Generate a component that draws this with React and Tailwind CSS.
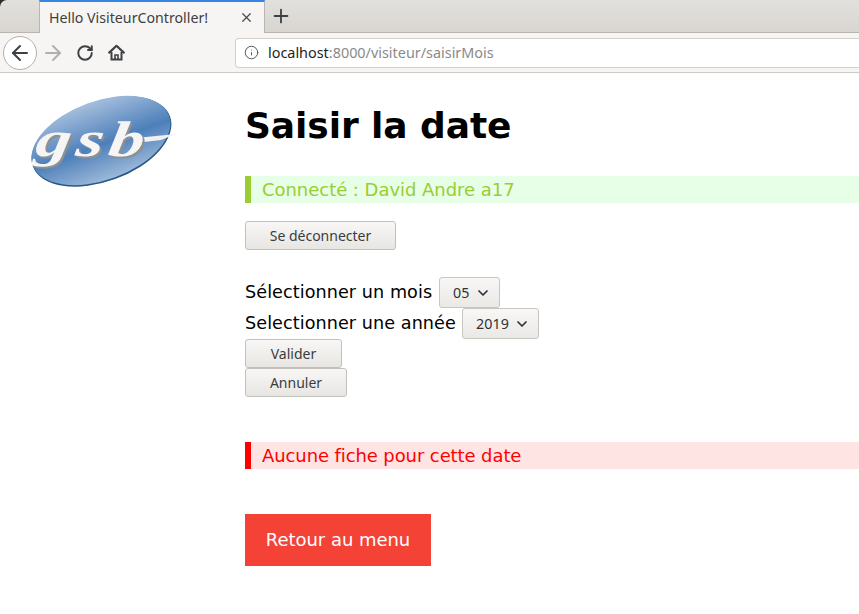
import React from "react";
import { ArrowLeft, ArrowRight, ChevronDown, Info, Plus, RotateCw, X } from "lucide-react";

const pageFont = "font-['DejaVu_Sans',sans-serif]";
const uiFont = "font-['Noto_Sans',sans-serif]";

function Logo() {
  return (
    <svg width="148" height="94" viewBox="0 0 148 94" className="block">
      <defs>
        <linearGradient id="oval" x1="0" y1="0" x2="0" y2="1">
          <stop offset="0" stopColor="#a5bedd" />
          <stop offset="0.55" stopColor="#4c7fba" />
          <stop offset="0.8" stopColor="#7a9fcb" />
          <stop offset="1" stopColor="#9ab8da" />
        </linearGradient>
      </defs>
      <ellipse cx="71.5" cy="46.5" rx="73" ry="40" transform="rotate(-20 71.5 46.5)" fill="#2a5684" />
      <ellipse cx="71" cy="45.5" rx="72.5" ry="39.5" transform="rotate(-20 71 45.5)" fill="url(#oval)" />
      <path d="M106 43 L146 39 L131 45 L106 48 Z" fill="#f1f1f1" />
      <text
        transform="translate(6,63) scale(1.42,1) skewX(-6)"
        fontFamily="'Liberation Serif',serif"
        fontSize="50"
        fontWeight="700"
        fontStyle="italic"
        letterSpacing="3.5"
        fill="#8c8f93"
      >
        gsb
      </text>
      <text
        transform="translate(4,61) scale(1.42,1) skewX(-6)"
        fontFamily="'Liberation Serif',serif"
        fontSize="50"
        fontWeight="700"
        fontStyle="italic"
        letterSpacing="3.5"
        fill="#f5f5f5"
      >
        gsb
      </text>
    </svg>
  );
}

function HomeIcon() {
  return (
    <svg width="17" height="17" viewBox="0 0 17 17" className="ml-[14px] text-[#3d4143]" fill="none" stroke="currentColor">
      <path d="M1.2 8.6 8.5 1.8l7.3 6.8" strokeWidth="2.2" strokeLinejoin="round" strokeLinecap="round" />
      <path d="M3.5 8v7.5h10V8" strokeWidth="2" />
      <path d="M7 15.5v-4.5h3v4.5" strokeWidth="1.6" />
    </svg>
  );
}

function NativeButton({ width, children }) {
  return (
    <button className={`${uiFont} ${width} block h-[29px] rounded-[3px] border border-[#c3c0bb] bg-gradient-to-b from-[#f8f7f6] to-[#e8e6e3] text-[14px] text-[#3a3d3e]`}>
      {children}
    </button>
  );
}

function NativeSelect({ width, value }) {
  return (
    <span className={`${uiFont} ${width} inline-flex h-[31px] items-center gap-[5px] rounded-[3px] border border-[#c9c6c1] bg-gradient-to-b from-[#f8f7f6] to-[#ebe9e6] pl-[13px] text-[14.3px] text-[#2e3436]`}>
      {value}
      <ChevronDown size={16} strokeWidth={2.6} />
    </span>
  );
}

export default function App() {
  return (
    <div className="relative min-h-[614px] overflow-hidden bg-white">
      {/* browser tabs */}
      <div className="bg-[#2b2b2b]">
        <div className={`${uiFont} flex h-[33px] rounded-tl-[7px] border-b border-[#b9b6b1] bg-gradient-to-b from-[#e2e0dc] to-[#d9d6d2]`}>
          <div className="ml-[39px] flex h-[33px] w-[226px] items-center justify-between border-x border-[#b9b6b1] border-t-2 border-t-[#3584e4] bg-[#f6f5f4] pl-[9px] pr-[10px] text-[14.2px] text-[#3d3f40]">
            <span>Hello VisiteurController!</span>
            <X size={15} strokeWidth={2} className="text-[#4a4d4f]" />
          </div>
          <div className="flex w-[32px] items-center justify-center text-[#3d4143]">
            <Plus size={22} strokeWidth={2} />
          </div>
        </div>
      </div>

      {/* browser toolbar */}
      <div className={`${uiFont} flex h-[40px] items-center border-b border-[#cdcac5] bg-[#f6f5f4]`}>
        <div className="ml-[3px] flex h-[34px] w-[34px] shrink-0 items-center justify-center rounded-full border border-[#b5b2ad] bg-white text-[#3d4143]">
          <ArrowLeft size={24} strokeWidth={2} />
        </div>
        <ArrowRight size={24} strokeWidth={2} className="ml-[4px] shrink-0 text-[#b0b0b0]" />
        <RotateCw size={18} strokeWidth={2.6} className="ml-[11px] shrink-0 text-[#3d4143]" />
        <HomeIcon />
        <div className="ml-[110px] flex h-[30px] flex-1 items-center rounded-l-[4px] border border-r-0 border-[#d3d0cb] bg-white pl-[8px] text-[14.4px]">
          <Info size={15} strokeWidth={1.6} className="text-[#55585a]" />
          <span className="ml-[9px] text-[#1f1f1f]">localhost</span>
          <span className="text-[#8a8a8a]">:8000/visiteur/saisirMois</span>
        </div>
      </div>

      {/* page */}
      <div className={`${pageFont} flex text-black`}>
        <div className="w-[245px] shrink-0 pl-[30px] pt-[22px]">
          <Logo />
        </div>
        <div className="flex-1">
          <h1 className="mt-[28px] text-[36px] font-bold leading-[50px] tracking-[-0.08px]">Saisir la date</h1>

          <div className="mt-[25px] h-[27px] border-l-[6px] border-[#9acd32] bg-[#e6ffe6] pl-[11px] text-[18px] leading-[27px] tracking-[-0.04px] text-[#9acd32]">
            Connecté : David Andre a17
          </div>

          <div className="mt-[18px]">
            <NativeButton width="w-[151px]">Se déconnecter</NativeButton>
          </div>

          <div className="mt-[27px] flex h-[31px] items-center text-[17.6px] tracking-[0.07px]">
            <span className="w-[194px] pb-[1px]">Sélectionner un mois</span>
            <NativeSelect width="w-[61px]" value="05" />
          </div>
          <div className="flex h-[31px] items-center text-[17.6px] tracking-[0.07px]">
            <span className="w-[217px] pb-[1px]">Selectionner une année</span>
            <NativeSelect width="w-[77px]" value="2019" />
          </div>
          <NativeButton width="w-[97px]">Valider</NativeButton>
          <NativeButton width="w-[102px]">Annuler</NativeButton>

          <div className="mt-[45px] h-[27px] border-l-[6px] border-[#ff0000] bg-[#ffe4e4] pl-[11px] text-[18px] leading-[27px] tracking-[-0.1px] text-[#ff0000]">
            Aucune fiche pour cette date
          </div>

          <div className="mt-[45px] flex h-[52px] w-[186px] items-center justify-center bg-[#f44336] pb-[2px] text-[18px] tracking-[-0.04px] text-white">
            Retour au menu
          </div>
        </div>
      </div>
    </div>
  );
}
